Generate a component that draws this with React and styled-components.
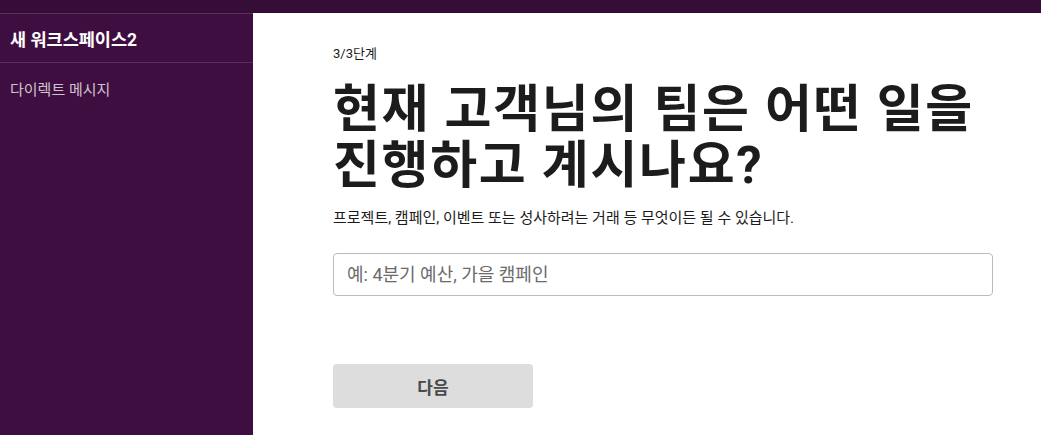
import React from "react";
import styled, { createGlobalStyle } from "styled-components";

const GlobalStyle = createGlobalStyle`
  html, body {
    margin: 0;
    padding: 0;
    background: #ffffff;
    font-family: Roboto, "Noto Sans CJK KR", "Noto Sans", sans-serif;
  }
`;

const Page = styled.div`
  display: flex;
  flex-direction: column;
  height: 435px;
  overflow: hidden;
`;

const TopBar = styled.div`
  height: 13px;
  flex-shrink: 0;
  background: #350d36;
`;

const Body = styled.div`
  display: flex;
  flex: 1;
`;

const Sidebar = styled.aside`
  width: 253px;
  flex-shrink: 0;
  background: #3f0e40;
  border-top: 1px solid #5a2f5b;
  box-sizing: border-box;
`;

const WorkspaceName = styled.div`
  height: 48px;
  display: flex;
  align-items: center;
  padding: 0 10px;
  border-bottom: 1px solid #5a2f5b;
  color: #ffffff;
  font-weight: 700;
  font-size: 17.5px;
`;

const NavItem = styled.div`
  padding: 15px 10px 0;
  color: #cfc3cf;
  font-size: 15px;
`;

const Main = styled.main`
  flex: 1;
  padding: 31px 0 0 80px;
`;

const Content = styled.div`
  width: 660px;
`;

const Step = styled.div`
  font-size: 13px;
  line-height: 19px;
  color: #1d1c1d;
`;

const Title = styled.h1`
  margin: 19px 0 0;
  font-size: 51px;
  line-height: 56px;
  letter-spacing: 1.7px;
  font-weight: 700;
  color: #1d1c1d;
`;

const Subtitle = styled.p`
  margin: 13px 0 0;
  font-size: 15px;
  line-height: 22px;
  color: #1d1c1d;
`;

const Input = styled.input`
  display: block;
  margin-top: 24px;
  width: 100%;
  height: 43px;
  box-sizing: border-box;
  padding: 0 13px;
  border: 1px solid #bbbbbb;
  border-radius: 4px;
  font-family: inherit;
  font-size: 18px;
  color: #1d1c1d;
  &::placeholder {
    color: #6b6b6b;
  }
`;

const NextButton = styled.button`
  display: block;
  margin-top: 68px;
  width: 200px;
  height: 44px;
  border: 0;
  border-radius: 4px;
  background: #dddddd;
  color: #4a4a4a;
  font-family: inherit;
  font-weight: 700;
  font-size: 17px;
`;

const App = () => (
  <Page>
    <GlobalStyle />
    <TopBar />
    <Body>
      <Sidebar>
        <WorkspaceName>새 워크스페이스2</WorkspaceName>
        <NavItem>다이렉트 메시지</NavItem>
      </Sidebar>
      <Main>
        <Content>
          <Step>3/3단계</Step>
          <Title>
            현재 고객님의 팀은 어떤 일을
            <br />
            진행하고 계시나요?
          </Title>
          <Subtitle>
            프로젝트, 캠페인, 이벤트 또는 성사하려는 거래 등 무엇이든 될 수
            있습니다.
          </Subtitle>
          <Input placeholder="예: 4분기 예산, 가을 캠페인" />
          <NextButton>다음</NextButton>
        </Content>
      </Main>
    </Body>
  </Page>
);

export default App;
